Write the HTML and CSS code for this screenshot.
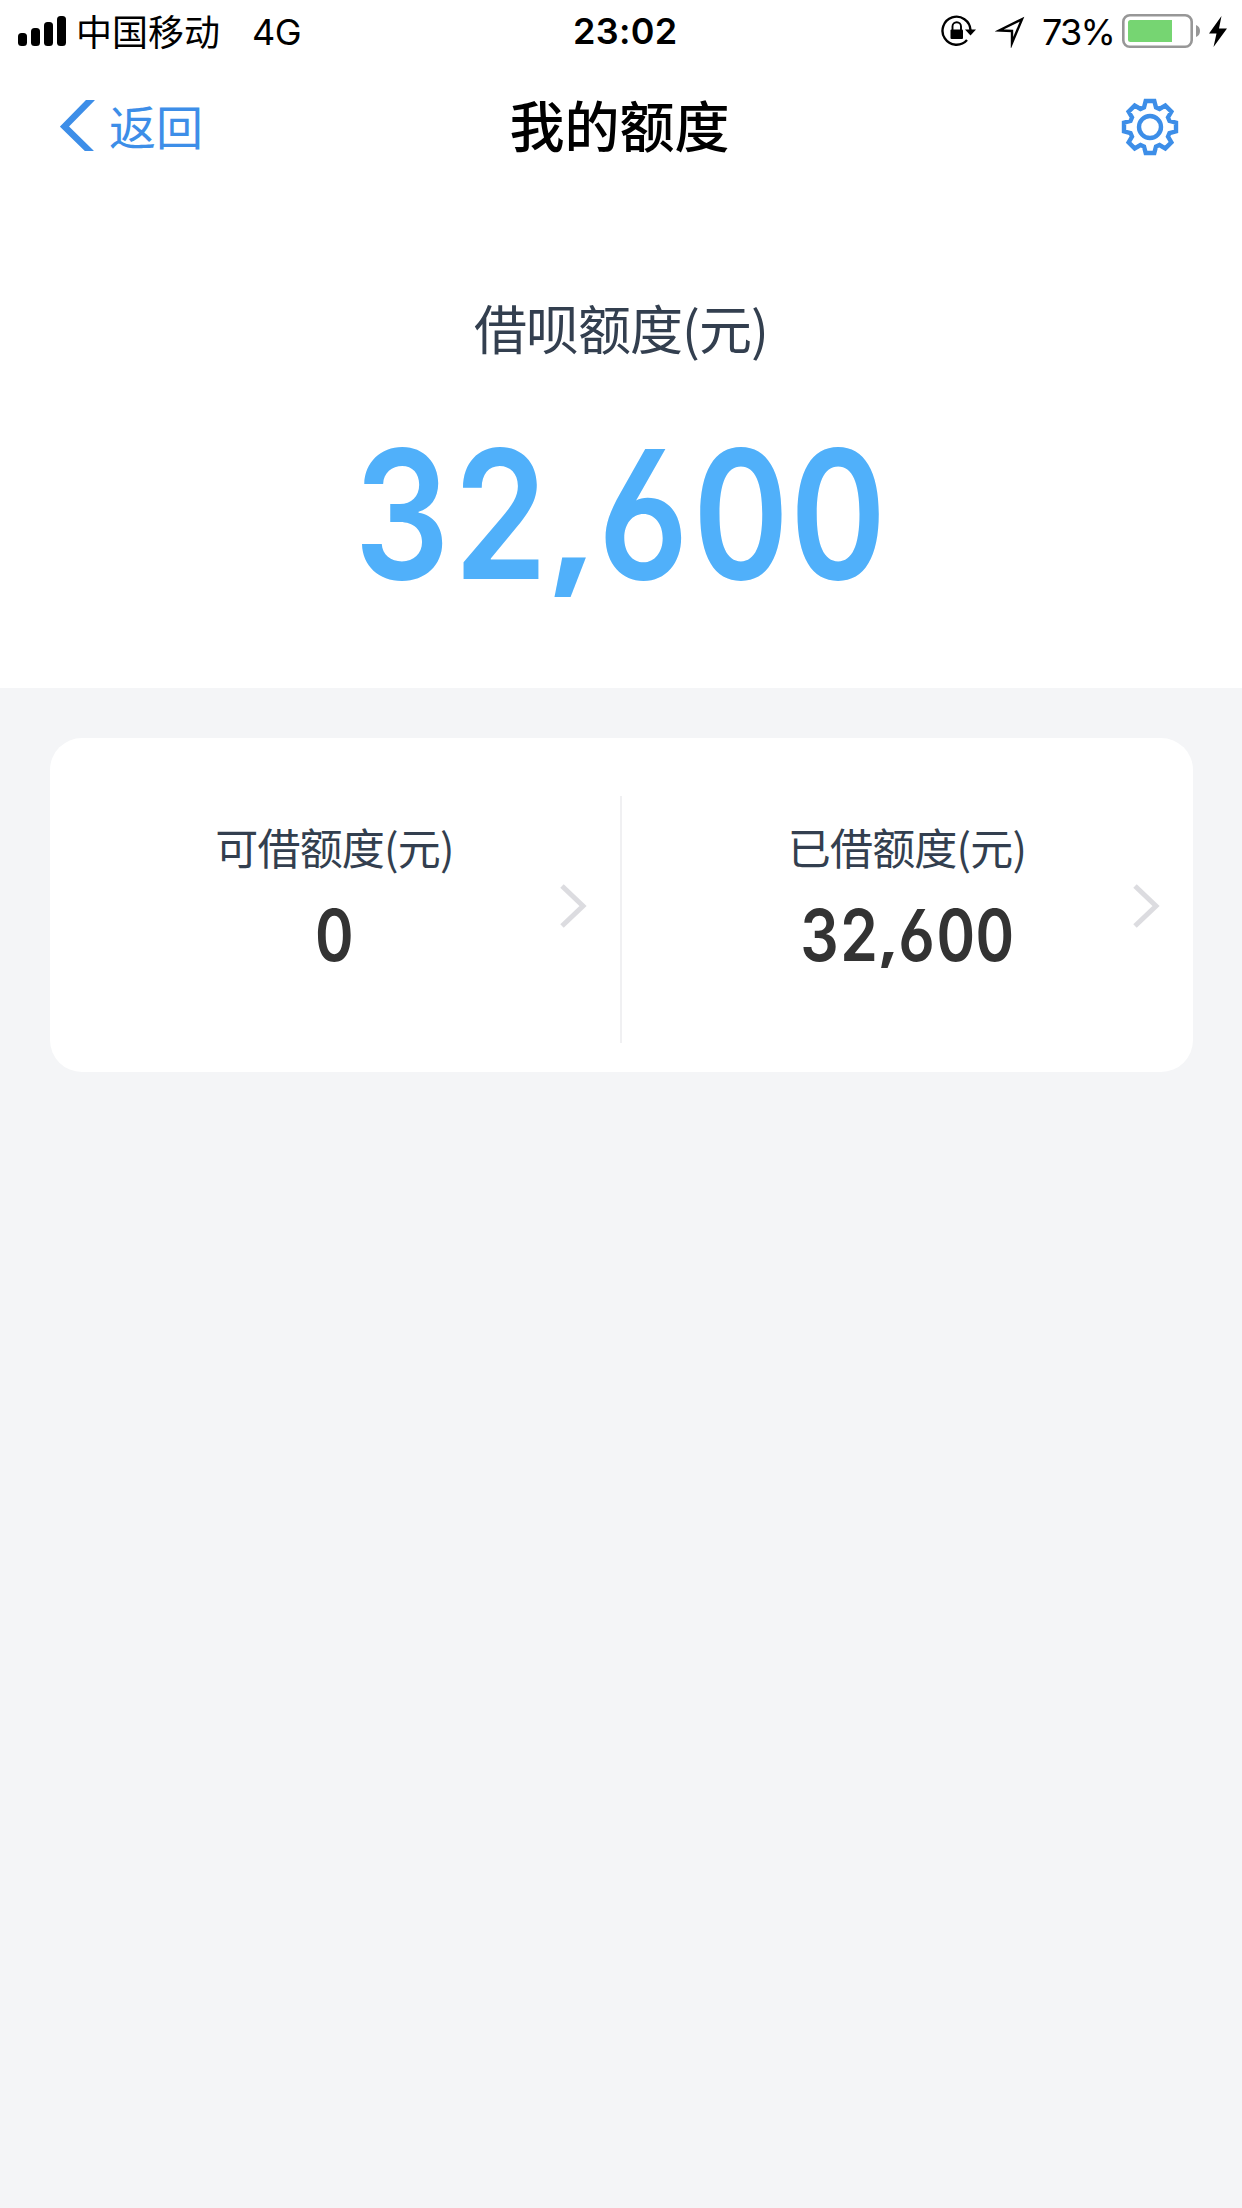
FILE: index.html
```html
<!DOCTYPE html>
<html lang="zh-CN">
<head>
<meta charset="utf-8">
<title>我的额度</title>
<link rel="stylesheet" href="styles.css">
</head>
<body>
<div class="status">
  <div class="status-left">
    <svg class="signal" width="48" height="30" viewBox="0 0 48 30"><rect y="17" width="9" height="13" rx="3.5"/><rect x="13" y="12" width="9" height="18" rx="3.5"/><rect x="26" y="6" width="9" height="24" rx="3.5"/><rect x="39" width="9" height="30" rx="3.5"/></svg>
    <span class="carrier">中国移动</span>
    <span class="network">4G</span>
  </div>
  <div class="clock">23:02</div>
  <div class="status-right">
    <svg class="lock" width="36" height="32" viewBox="0 0 36 32"><path d="M30.500 15A14 14 0 1 0 27 25" fill="none" stroke="#000" stroke-width="2.400"/><path d="M25 14.500h11l-5.500 6z"/><rect x="10.500" y="14.500" width="12.500" height="9.500" rx="1"/><path d="M12.500 15.500v-4a4.200 4.200 0 0 1 8.500 0v4" fill="none" stroke="#000" stroke-width="1.900"/></svg>
    <svg class="arrow" width="30" height="32" viewBox="0 0 30 32"><path d="M4 14.500L27 3.200 17 27V15z" fill="none" stroke="#000" stroke-width="2.400" stroke-miterlimit="8"/></svg>
    <span class="percent">73%</span>
    <svg class="battery" width="79" height="34" viewBox="0 0 79 34"><rect x="1.300" y="1.300" width="68.400" height="31.400" rx="6.500" fill="#fff" stroke="#979797" stroke-width="2.600"/><path d="M8.500 6H50v22H8.500a2.500 2.500 0 0 1-2.500-2.500v-17A2.500 2.500 0 0 1 8.500 6z" fill="#76d572"/><path d="M74 11q4 1.500 4 6t-4 6z" fill="#979797"/></svg>
    <svg class="bolt" width="18" height="31" viewBox="0 0 18 31"><path d="M12.500 0L0 17.500h7.500L4.500 31 18 12.500H10z"/></svg>
  </div>
</div>
<header class="nav">
  <div class="back">
    <svg width="36" height="51" viewBox="0 0 36 51"><path d="M32.500-2L4.500 26.500 31.500 53" fill="none" stroke="#3d8ee8" stroke-width="6.500"/></svg>
    <span>返回</span>
  </div>
  <h1 class="title">我的额度</h1>
  <svg class="gear" width="58" height="58" viewBox="-29 -29 58 58"><path d="M-6-19.500L-4.300-26H4.300L6-19.500 9.500-18 15.300-21.400 21.400-15.300 18-9.500 19.500-6 26-4.300V4.300L19.500 6 18 9.500 21.400 15.300 15.300 21.400 9.500 18 6 19.500 4.300 26H-4.300L-6 19.500-9.500 18-15.300 21.400-21.400 15.300-18 9.500-19.500 6-26 4.300V-4.300L-19.500-6-18-9.500-21.400-15.300-15.300-21.400-9.500-18z"/><circle r="11"/></svg>
</header>
<section class="hero">
  <div class="hero-label">借呗额度(元)</div>
  <div class="hero-amount"><span class="din">32<span class="comma">,</span>600</span></div>
</section>
<main class="card">
  <div class="cell">
    <div class="cell-label">可借额度(元)</div>
    <div class="cell-amount"><span class="din">0</span></div>
    <svg class="chevron" width="27" height="44" viewBox="0 0 27 44"><path d="M2 2L23 22 2 42"/></svg>
  </div>
  <div class="divider"></div>
  <div class="cell">
    <div class="cell-label">已借额度(元)</div>
    <div class="cell-amount"><span class="din">32<span class="comma">,</span>600</span></div>
    <svg class="chevron" width="27" height="44" viewBox="0 0 27 44"><path d="M2 2L23 22 2 42"/></svg>
  </div>
</main>
</body>
</html>
```
FILE: styles.css
```css
* { box-sizing: border-box; }
body {
  margin: 0;
  width: 1242px;
  min-height: 2208px;
  background: #f4f5f7;
  font-family: Inter, "Noto Sans CJK SC", sans-serif;
  color: #000;
}
svg { display: block; flex: none; }
.status {
  height: 60px;
  display: grid;
  grid-template-columns: 1fr 110px 1fr;
  background: #fff;
  font-size: 36px;
  line-height: 60px;
  white-space: nowrap;
}
.status-left, .status-right { display: flex; align-items: center; }
.status-left { padding-left: 18px; }
.carrier { margin: -3px 0 0 10px; font-family: "Noto Sans CJK SC", sans-serif; }
.network { margin-left: 32px; margin-top: 2px; letter-spacing: -.5px; }
.clock { text-align: center; font-weight: 560; padding: 1px 0 0 7px; letter-spacing: .3px; }
.status-right { justify-content: flex-end; padding-right: 15px; }
.arrow { margin: 1px 0 0 19px; }
.percent { margin: 2px 8px 0 17px; letter-spacing: -1.8px; }
.bolt { margin-left: 8px; }
.nav {
  height: 132px;
  display: grid;
  grid-template-columns: 1fr 240px 1fr;
  align-items: center;
  padding: 0 63px 0 60px;
  background: #fff;
  font-family: "Noto Sans CJK SC", sans-serif;
}
.back { display: flex; align-items: center; gap: 13px; margin-top: -2px; color: #3d8ee8; font-size: 47px; line-height: 60px; }
.title { margin: -7px 0 0; text-align: center; font-size: 55px; line-height: 70px; font-weight: 500; white-space: nowrap; }
.gear { justify-self: end; margin-top: 1px; fill: none; stroke: #3d8ee8; stroke-width: 4.4; }
.hero {
  height: 496px;
  padding-top: 97px;
  background: #fff;
  text-align: center;
}
.hero-label {
  height: 76px;
  font: 400 53px/76px "Noto Sans CJK SC", sans-serif;
  letter-spacing: -1px;
  color: #333f4f;
}
.hero-amount {
  height: 180px;
  margin-top: 59px;
  font-size: 179px;
  line-height: 180px;
  font-weight: 560;
  color: #50b0fa;
}
.din { display: inline-block; transform: scaleX(.84); font-feature-settings: "cv03", "tnum"; }
.comma { display: inline-block; margin: 0 .015em 0 .02em; transform: scale(1.2, .75); transform-origin: 50% 70%; }
.card {
  height: 334px;
  margin: 50px 49px 0 50px;
  display: grid;
  grid-template-columns: 570px 2px 1fr;
  background: #fff;
  border-radius: 32px;
}
.cell {
  display: grid;
  grid-template-columns: 1fr 27px;
  grid-template-rows: 60px 76px;
  row-gap: 21px;
  align-content: start;
  padding: 78px 33px 0 59px;
}
.cell-label {
  text-align: center;
  font: 400 43px/60px "Noto Sans CJK SC", sans-serif;
  letter-spacing: -.8px;
  color: #333f4f;
  white-space: nowrap;
}
.cell-amount {
  grid-row: 2;
  text-align: center;
  font-size: 72px;
  line-height: 76px;
  font-weight: 560;
  color: #333;
}
.chevron { grid-column: 2; grid-row: 1 / 3; align-self: center; margin-top: 23px; fill: none; stroke: #dcdce0; stroke-width: 5; }
.divider { height: 247px; margin-top: 58px; background: #f0f0f2; }
```
